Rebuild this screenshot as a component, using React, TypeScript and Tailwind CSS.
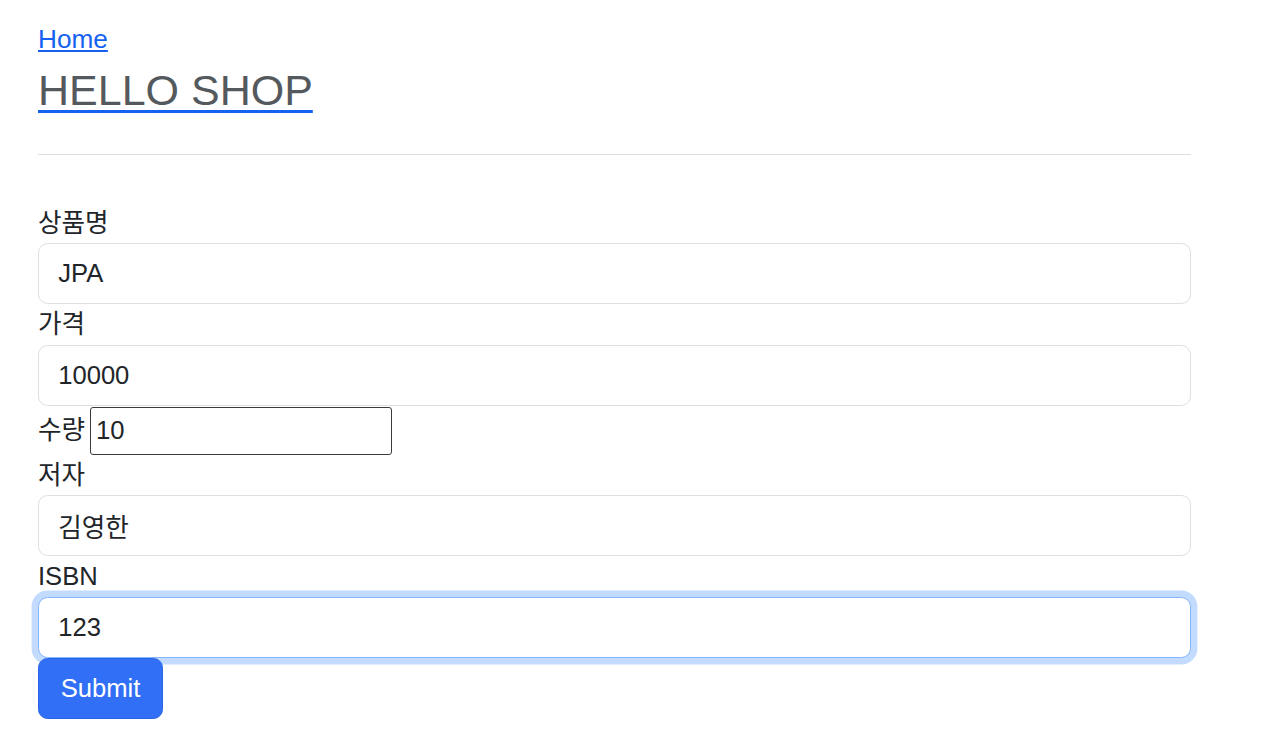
import React from "react";

const fieldClass =
  "block w-full h-[61px] rounded-[9.6px] border-[1.6px] border-[#dcdfe3] bg-white px-[19.2px] text-[25.6px] text-[#212529] outline-none";

const App: React.FC = () => {
  return (
    <div className="min-h-screen bg-white px-[38px] pt-[19.5px] font-['Liberation_Sans','Noto_Sans_CJK_KR',sans-serif] text-[#212529]">
      <div className="w-[1153px]">
        {/* Header */}
        <a href="#" className="block w-fit text-[26.2px] leading-[38px] text-[#1662f0] underline">
          Home
        </a>
        <h3 className="mt-[6px] text-[43px] leading-[52px] font-normal">
          <a href="#" className="text-[#1662f0] underline decoration-[3px] underline-offset-[5px]">
            <span className="text-[#54595e]">HELLO SHOP</span>
          </a>
        </h3>
        <hr className="mt-[38.5px] border-0 border-t-[1.6px] border-[#dedfe0]" />

        {/* Form */}
        <form className="mt-[47.5px] text-[25.6px]" onSubmit={(e) => e.preventDefault()}>
          <div className="h-[40px] leading-[40px]">상품명</div>
          <input className={fieldClass} defaultValue="JPA" />

          <div className="h-[41px] leading-[41px]">가격</div>
          <input className={fieldClass} defaultValue="10000" />

          <div className="flex h-[50px] items-center gap-[5px]">
            <span>수량</span>
            <input
              className="h-[48px] w-[302px] rounded-[3px] border-[1.6px] border-[#3b3b3b] px-[5px] text-[25.6px] outline-none"
              defaultValue="10"
            />
          </div>

          <div className="h-[39px] leading-[39px]">저자</div>
          <input className={fieldClass} defaultValue="김영한" />

          <div className="h-[41px] leading-[41px]">ISBN</div>
          <input
            className="block w-full h-[61px] rounded-[9.6px] border-[1.6px] border-[#86b7fe] bg-white px-[19.2px] text-[25.6px] text-[#212529] outline-none shadow-[0_0_0_6.4px_rgba(13,110,253,0.25)]"
            defaultValue="123"
          />

          <button
            type="submit"
            className="block h-[61px] w-[125px] rounded-[9.6px] border-[1.6px] border-[#2c64e6] bg-[#316ff6] text-[25.6px] text-white"
          >
            Submit
          </button>
        </form>
      </div>
    </div>
  );
};

export default App;
